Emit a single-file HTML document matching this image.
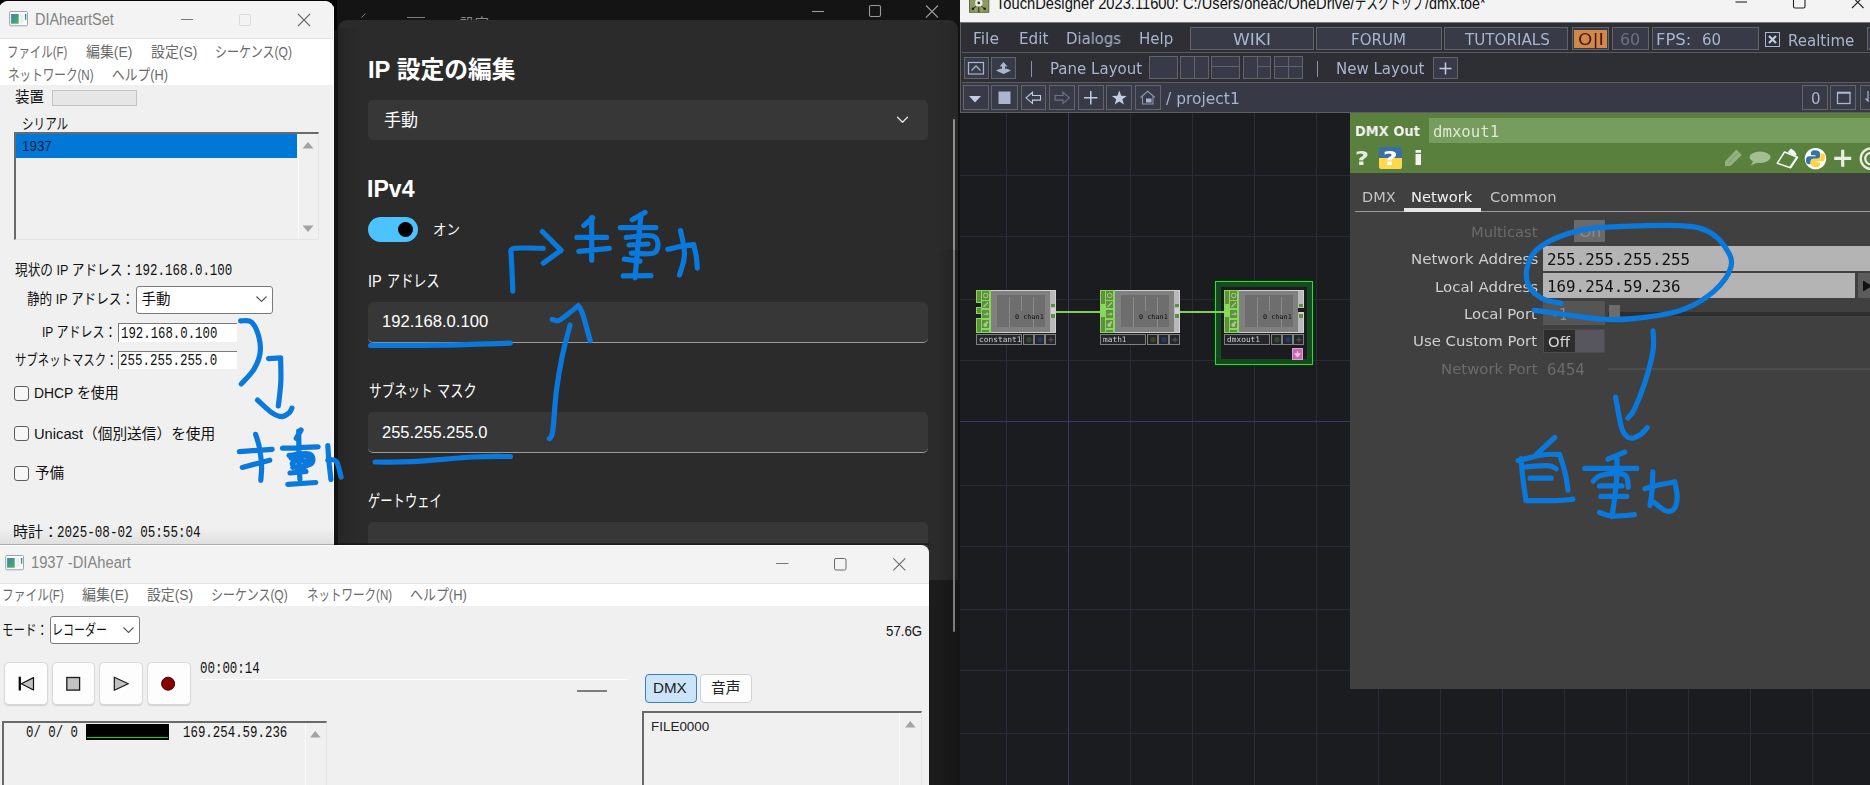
<!DOCTYPE html>
<html lang="ja"><head><meta charset="utf-8"><title>screenshot</title>
<style>
*{box-sizing:border-box;margin:0;padding:0}
html,body{width:1870px;height:785px;overflow:hidden;background:#1c1c1c}
body{position:relative;font-family:"Liberation Sans","Noto Sans CJK JP",sans-serif}
.a{position:absolute}
.t{position:absolute;white-space:pre;transform-origin:0 50%;display:block}
.fs{font-family:"Liberation Sans","Noto Sans CJK JP",sans-serif}
.fm{font-family:"Liberation Mono","Noto Sans CJK JP",monospace}
.fd{font-family:"DejaVu Sans","Liberation Sans",sans-serif;will-change:transform}
.fdm{font-family:"DejaVu Sans Mono","Liberation Mono",monospace;will-change:transform}
svg{position:absolute;overflow:visible}
.cb{position:absolute;width:15px;height:15px;border:1px solid #5c5c5c;border-radius:3px;background:#f6f6f6}
.sunk{position:absolute;border:1px solid #a0a0a0;border-top:2px solid #6a6a6a;border-left:2px solid #6a6a6a;border-right:1px solid #e3e3e3;border-bottom:1px solid #e3e3e3;background:#f0f0f0}
.tdb{position:absolute;border:1px solid #62646c;background:#383b47}
</style></head><body>
<div class="a" style="left:334px;top:0;width:626px;height:560px;background:#141414"></div>
<span class="t fs" style="left:459.7px;top:16.6px;font-size:14.5px;line-height:14.5px;color:#8a8a8a;transform:scaleX(1.0070);">設定</span>
<svg class="a" style="left:334px;top:0" width="626" height="22"><path d="M27.5 17.5 l4 -4 M73 17.5h18" stroke="#7d7d7d" stroke-width="1" fill="none"/>
<path d="M478 11.5h12" stroke="#9b9b9b" stroke-width="1.1" fill="none"/><rect x="535.5" y="5.5" width="11" height="11" rx="1.5" stroke="#9b9b9b" stroke-width="1.1" fill="none"/><path d="M592 5.5l12 12M604 5.5l-12 12" stroke="#9b9b9b" stroke-width="1.1" fill="none"/></svg>
<div class="a" style="left:338px;top:20px;width:620px;height:560px;background:#2b2b2b;border-radius:9px 9px 0 0"></div>
<span class="t fs" style="left:368.29px;top:58.8px;font-size:23.6px;line-height:23.6px;color:#fff;font-weight:bold;transform:scaleX(1.0081);">IP 設定の編集</span>
<div class="a" style="left:368px;top:100px;width:560px;height:40px;background:#373737;border-radius:5px"></div>
<span class="t fs" style="left:384.2px;top:112.2px;font-size:16.5px;line-height:16.5px;color:#fff;transform:scaleX(1.0308);">手動</span>
<svg class="a" style="left:896px;top:115px" width="14" height="10"><path d="M1.5 2.2l5 5 5-5" stroke="#e4e4e4" stroke-width="1.3" fill="none" stroke-linecap="round" stroke-linejoin="round"/></svg>
<span class="t fs" style="left:366.56px;top:177.2px;font-size:24.5px;line-height:24.5px;color:#fff;font-weight:bold;transform:scaleX(0.9443);">IPv4</span>
<div class="a" style="left:368px;top:217px;width:50px;height:25px;background:#4cc2ff;border-radius:13px"></div>
<div class="a" style="left:398px;top:222px;width:15px;height:15px;background:#000;border-radius:50%"></div>
<span class="t fs" style="left:432.57px;top:222.8px;font-size:14.5px;line-height:14.5px;color:#fff;transform:scaleX(0.9309);">オン</span>
<span class="t fs" style="left:367.82px;top:273.1px;font-size:16.5px;line-height:16.5px;color:#fff;transform:scaleX(0.8777);">IP</span><span class="t fs" style="left:387.3px;top:273.1px;font-size:16.5px;line-height:16.5px;color:#fff;transform:scaleX(0.7984);">アドレス</span>
<div class="a" style="left:368px;top:301.6px;width:559.5px;height:41.3px;background:#373737;border-radius:5px;border-bottom:1px solid #9a9a9a"></div>
<span class="t fs" style="left:381.82px;top:313.4px;font-size:17px;line-height:17px;color:#fff;transform:scaleX(0.9761);">192.168.0.100</span>
<span class="t fs" style="left:368.53px;top:383.1px;font-size:16.5px;line-height:16.5px;color:#fff;transform:scaleX(0.7709);">サブネット</span><span class="t fs" style="left:437.4px;top:383.1px;font-size:16.5px;line-height:16.5px;color:#fff;transform:scaleX(0.8000);">マスク</span>
<div class="a" style="left:368px;top:411.7px;width:559.5px;height:41.3px;background:#373737;border-radius:5px;border-bottom:1px solid #9a9a9a"></div>
<span class="t fs" style="left:382.4px;top:423.5px;font-size:17px;line-height:17px;color:#fff;transform:scaleX(0.9708);">255.255.255.0</span>
<span class="t fs" style="left:368.2px;top:493.2px;font-size:16.5px;line-height:16.5px;color:#fff;transform:scaleX(0.7456);">ゲートウェイ</span>
<div class="a" style="left:368px;top:522.2px;width:559.5px;height:41.3px;background:#373737;border-radius:5px"></div>
<div class="a" style="left:952.5px;top:119px;width:2px;height:513px;background:#9a9a9a;border-radius:1px"></div>
<div class="a" style="left:936px;top:20px;width:24px;height:230px;background:linear-gradient(90deg,rgba(0,0,0,0),rgba(0,0,0,.04) 45%,rgba(0,0,0,.1))"></div>
<div class="a" style="left:936px;top:250px;width:24px;height:535px;background:linear-gradient(90deg,rgba(0,0,0,0),rgba(0,0,0,.1) 45%,rgba(0,0,0,.26))"></div>
<div class="a" style="left:338px;top:28px;width:22px;height:516px;background:linear-gradient(90deg,rgba(0,0,0,.13),rgba(0,0,0,0))"></div>

<div class="a" style="left:0;top:0;width:337px;height:30px;background:#060606"></div>
<div class="a" style="left:-1px;top:0.700px;width:335px;height:545px;background:#f0f0f0;border-radius:9px 9px 0 0;overflow:hidden">
 <div class="a" style="left:0;top:0;width:336px;height:38.800px;background:#f3f3f3;border-bottom:1px solid #e2e2e2"></div>
 <div class="a" style="left:0;top:38.800px;width:336px;height:45.700px;background:#fff"></div>
 <div class="a" style="left:334px;top:0;width:1px;height:546px;background:#fafafa"></div>
</div>
<svg class="a" style="left:9px;top:11px" width="20" height="16"><defs><linearGradient id="ig" x1="0" y1="0" x2="1" y2="1"><stop offset="0" stop-color="#4a7db4"/><stop offset=".45" stop-color="#3f9a86"/><stop offset="1" stop-color="#4db258"/></linearGradient><linearGradient id="ig2" x1="0" y1="0" x2="0" y2="1"><stop offset="0" stop-color="#3f6fc0"/><stop offset="1" stop-color="#4db258"/></linearGradient></defs><rect x="0.700" y="0.500" width="17.800" height="14.300" rx="1" fill="#fbfbfb" stroke="#9aa3b3" stroke-width="1"/><rect x="2.100" y="3" width="7.600" height="9.700" fill="url(#ig)"/><rect x="11.300" y="3.200" width="3.200" height="9.300" fill="#ededed"/><rect x="15.900" y="3" width="1.400" height="5.900" fill="url(#ig2)"/></svg>
<span class="t fs" style="left:34.8px;top:11.6px;font-size:16px;line-height:16px;color:#828282;transform:scaleX(0.9030);">DIAheartSet</span>
<svg class="a" style="left:170px;top:8px" width="160" height="24"><path d="M11 11.5h12" stroke="#777" stroke-width="1"/><rect x="69.5" y="6.5" width="11" height="11" rx="1.5" stroke="#dcdcdc" fill="none"/><path d="M128 6l12 12M140 6l-12 12" stroke="#6a6a6a" stroke-width="1.1"/></svg>
<span class="t fs" style="left:6.98px;top:43.5px;font-size:15px;line-height:15px;color:#6a6a6a;transform:scaleX(0.7621);">ファイル(F)</span>
<span class="t fs" style="left:85.8px;top:43.5px;font-size:15px;line-height:15px;color:#6a6a6a;transform:scaleX(0.9280);">編集(E)</span>
<span class="t fs" style="left:151.0px;top:43.5px;font-size:15px;line-height:15px;color:#6a6a6a;transform:scaleX(0.9260);">設定(S)</span>
<span class="t fs" style="left:214.7px;top:43.5px;font-size:15px;line-height:15px;color:#6a6a6a;transform:scaleX(0.8018);">シーケンス(Q)</span>
<span class="t fs" style="left:7.73px;top:67.0px;font-size:15px;line-height:15px;color:#6a6a6a;transform:scaleX(0.7721);">ネットワーク(N)</span>
<span class="t fs" style="left:112.2px;top:67.0px;font-size:15px;line-height:15px;color:#6a6a6a;transform:scaleX(0.8507);">ヘルプ(H)</span>
<span class="t fs" style="left:14.5px;top:89.3px;font-size:15px;line-height:15px;color:#111;transform:scaleX(0.9600);">装置</span>
<div class="a" style="left:51.5px;top:89.900px;width:85px;height:16.500px;background:#e6e6e6;border:1px solid #c4c4c4"></div>
<span class="t fs" style="left:21.93px;top:116.0px;font-size:15px;line-height:15px;color:#111;transform:scaleX(0.7712);">シリアル</span>
<div class="sunk" style="left:13.5px;top:132px;width:305.5px;height:108px"></div>
<div class="a" style="left:15.5px;top:134px;width:281.5px;height:24px;background:#0078d7"></div>
<span class="t fs" style="left:22.44px;top:139.3px;font-size:14px;line-height:14px;color:#10203a;transform:scaleX(0.9553);">1937</span>
<div class="a" style="left:297.5px;top:134px;width:1px;height:105px;background:#fafafa"></div>
<svg class="a" style="left:298px;top:134px" width="21" height="106"><path d="M4.500 14.500l5.500-6.500 5.500 6.500z" fill="#a3a3a3"/><path d="M4.500 91.500l5.500 6.500 5.500-6.500z" fill="#a3a3a3"/></svg>
<span class="t fs" style="left:14.5px;top:262.8px;font-size:14.5px;line-height:14.5px;color:#111;transform:scaleX(0.8733);">現状の IP アドレス：</span>
<span class="t fm" style="left:134.53px;top:263.3px;font-size:16.2px;line-height:16.2px;color:#111;transform:scaleX(0.7707);">192.168.0.100</span>
<span class="t fs" style="left:27.0px;top:292.2px;font-size:14.5px;line-height:14.5px;color:#111;transform:scaleX(0.8704);">静的 IP アドレス：</span>
<div class="a" style="left:135.5px;top:286px;width:137px;height:27.5px;background:#fff;border:1px solid #7a7a7a;border-radius:3px"></div>
<span class="t fs" style="left:141.5px;top:292.2px;font-size:14.5px;line-height:14.5px;color:#111;transform:scaleX(1.0000);">手動</span>
<svg class="a" style="left:255px;top:295px" width="14" height="10"><path d="M1.5 1.5l5 5 5-5" stroke="#555" stroke-width="1.1" fill="none"/></svg>
<span class="t fs" style="left:42.47px;top:325.1px;font-size:14.5px;line-height:14.5px;color:#111;transform:scaleX(0.8277);">IP アドレス：</span>
<div class="a" style="left:118px;top:323.2px;width:118.5px;height:19px;background:#fff;border-top:1px solid #7a7a7a;border-left:1px solid #7a7a7a"></div>
<span class="t fm" style="left:121.24px;top:325.8px;font-size:16.2px;line-height:16.2px;color:#111;transform:scaleX(0.7626);">192.168.0.100</span>
<span class="t fs" style="left:14.5px;top:352.8px;font-size:14.5px;line-height:14.5px;color:#111;transform:scaleX(0.7848);">サブネットマスク：</span>
<div class="a" style="left:118px;top:350.7px;width:118.5px;height:18.5px;background:#fff;border-top:1px solid #7a7a7a;border-left:1px solid #7a7a7a"></div>
<span class="t fm" style="left:120.23px;top:353.3px;font-size:16.2px;line-height:16.2px;color:#111;transform:scaleX(0.7707);">255.255.255.0</span>
<div class="cb" style="left:14px;top:386px"></div>
<span class="t fs" style="left:33.64px;top:386.2px;font-size:14.5px;line-height:14.5px;color:#111;transform:scaleX(0.9569);">DHCP を使用</span>
<div class="cb" style="left:14px;top:425.5px"></div>
<span class="t fs" style="left:33.59px;top:426.8px;font-size:14.5px;line-height:14.5px;color:#111;transform:scaleX(1.0133);">Unicast（個別送信）を使用</span>
<div class="cb" style="left:14px;top:465.5px"></div>
<span class="t fs" style="left:34.6px;top:466.2px;font-size:14.5px;line-height:14.5px;color:#111;transform:scaleX(1.0035);">予備</span>
<span class="t fs" style="left:13.46px;top:524.8px;font-size:14.5px;line-height:14.5px;color:#111;transform:scaleX(1.0405);">時計：</span>
<span class="t fm" style="left:57.22px;top:525.3px;font-size:16.2px;line-height:16.2px;color:#111;transform:scaleX(0.7782);">2025-08-02 05:55:04</span>

<div class="a" style="left:0;top:528px;width:334px;height:16px;background:linear-gradient(rgba(0,0,0,0),rgba(0,0,0,.07))"></div>
<div class="a" style="left:0;top:544px;width:334px;height:1px;background:#adadad"></div>
<div class="a" style="left:334px;top:543px;width:595px;height:2px;background:linear-gradient(rgba(0,0,0,.25),rgba(0,0,0,.55))"></div>
<div class="a" style="left:0;top:545px;width:929px;height:240px;background:#f0f0f0;border-radius:0 8px 0 0;overflow:hidden;border-top:1px solid #fcfcfc">
 <div class="a" style="left:0;top:0;width:929px;height:37.500px;background:#f3f3f3;border-bottom:1px solid #e2e2e2"></div>
 <div class="a" style="left:0;top:37.500px;width:929px;height:22px;background:#fff"></div>
</div>
<svg class="a" style="left:5px;top:555px" width="20" height="16"><rect x="0.700" y="0.500" width="17.800" height="14.300" rx="1" fill="#fbfbfb" stroke="#9aa3b3" stroke-width="1"/><rect x="2.100" y="3" width="7.600" height="9.700" fill="url(#ig)"/><rect x="11.300" y="3.200" width="3.200" height="9.300" fill="#ededed"/><rect x="15.900" y="3" width="1.400" height="5.900" fill="url(#ig2)"/></svg>
<span class="t fs" style="left:31.08px;top:555.4px;font-size:16px;line-height:16px;color:#858585;transform:scaleX(0.9198);">1937 -DIAheart</span>
<svg class="a" style="left:770px;top:553px" width="150" height="24"><path d="M6 10.5h12.5" stroke="#777" stroke-width="1"/><rect x="64.5" y="5.5" width="11.5" height="11.5" rx="1.5" stroke="#6a6a6a" fill="none"/><path d="M123.3 5.4l12 12M135.3 5.4l-12 12" stroke="#6a6a6a" stroke-width="1.1"/></svg>
<span class="t fs" style="left:1.54px;top:587.1px;font-size:15px;line-height:15px;color:#6a6a6a;transform:scaleX(0.7815);">ファイル(F)</span>
<span class="t fs" style="left:81.8px;top:587.1px;font-size:15px;line-height:15px;color:#6a6a6a;transform:scaleX(0.9360);">編集(E)</span>
<span class="t fs" style="left:147.3px;top:587.1px;font-size:15px;line-height:15px;color:#6a6a6a;transform:scaleX(0.9240);">設定(S)</span>
<span class="t fs" style="left:211.4px;top:587.1px;font-size:15px;line-height:15px;color:#6a6a6a;transform:scaleX(0.7997);">シーケンス(Q)</span>
<span class="t fs" style="left:306.63px;top:587.1px;font-size:15px;line-height:15px;color:#6a6a6a;transform:scaleX(0.7676);">ネットワーク(N)</span>
<span class="t fs" style="left:410.4px;top:587.1px;font-size:15px;line-height:15px;color:#6a6a6a;transform:scaleX(0.8629);">ヘルプ(H)</span>
<span class="t fs" style="left:2.31px;top:623.2px;font-size:14.5px;line-height:14.5px;color:#111;transform:scaleX(0.7903);">モード：</span>
<div class="a" style="left:49.5px;top:616px;width:90px;height:27.5px;background:#fff;border:1px solid #7a7a7a;border-radius:3px"></div>
<span class="t fs" style="left:52.33px;top:623.2px;font-size:14.5px;line-height:14.5px;color:#111;transform:scaleX(0.7574);">レコーダー</span>
<svg class="a" style="left:122px;top:626px" width="14" height="10"><path d="M1.5 1.5l5 5 5-5" stroke="#555" stroke-width="1.1" fill="none"/></svg>
<span class="t fs" style="left:886.4px;top:623.5px;font-size:14px;line-height:14px;color:#111;transform:scaleX(0.9477);">57.6G</span>
<div class="a" style="left:4.2px;top:662.300px;width:44px;height:42.400px;background:#fdfdfd;border:1px solid #d9d9d9;border-radius:4.500px;box-shadow:0 1px 1px rgba(0,0,0,.13)"></div>
<div class="a" style="left:51.8px;top:662.300px;width:43.6px;height:42.400px;background:#fdfdfd;border:1px solid #d9d9d9;border-radius:4.500px;box-shadow:0 1px 1px rgba(0,0,0,.13)"></div>
<div class="a" style="left:99.4px;top:662.300px;width:43.6px;height:42.400px;background:#fdfdfd;border:1px solid #d9d9d9;border-radius:4.500px;box-shadow:0 1px 1px rgba(0,0,0,.13)"></div>
<div class="a" style="left:147px;top:662.300px;width:43.6px;height:42.400px;background:#fdfdfd;border:1px solid #d9d9d9;border-radius:4.500px;box-shadow:0 1px 1px rgba(0,0,0,.13)"></div>
<svg class="a" style="left:0;top:662px" width="200" height="44"><path d="M19.800 14.700v13.800" stroke="#0a0a0a" stroke-width="2.300"/><path d="M21.300 21.700l12.200-6.100v12.400z" fill="#c2c2c2" stroke="#111" stroke-width="1.200" stroke-linejoin="round"/><rect x="66.800" y="15.500" width="12.800" height="12.600" fill="#c2c2c2" stroke="#1a1a1a" stroke-width="1.300"/><path d="M114.300 15.200v13l14-6.500z" fill="#c2c2c2" stroke="#1a1a1a" stroke-width="1.200" stroke-linejoin="round"/><circle cx="168.100" cy="21.700" r="6.500" fill="#8b0000" stroke="#300" stroke-width="1"/></svg>
<span class="t fm" style="left:199.8px;top:661.1px;font-size:16.2px;line-height:16.2px;color:#111;transform:scaleX(0.7688);">00:00:14</span>
<div class="a" style="left:199.8px;top:679.3px;width:428px;height:1.2px;background:#fff"></div>
<div class="a" style="left:576.7px;top:689.5px;width:30px;height:2px;background:#7d7d7d"></div>
<div class="a" style="left:644.5px;top:673.5px;width:52.5px;height:29.5px;background:#cce4f7;border:1.5px solid #3a7dc0;border-radius:4px"></div>
<span class="t fs" style="left:652.95px;top:680.8px;font-size:14.5px;line-height:14.5px;color:#222;transform:scaleX(1.0460);">DMX</span>
<div class="a" style="left:699.5px;top:673.5px;width:52px;height:29.5px;background:#fdfdfd;border:1px solid #d2d2d2;border-radius:4px"></div>
<span class="t fs" style="left:711.0px;top:680.8px;font-size:14.5px;line-height:14.5px;color:#222;transform:scaleX(1.0175);">音声</span>
<div class="sunk" style="left:642px;top:711px;width:280px;height:90px"></div>
<span class="t fs" style="left:651.0px;top:719.9px;font-size:13.5px;line-height:13.5px;color:#222;transform:scaleX(0.9959);">FILE0000</span>
<div class="a" style="left:899px;top:713px;width:1px;height:80px;background:#fafafa"></div>
<svg class="a" style="left:899px;top:713px" width="22" height="20"><path d="M6 14.5l5.3-6.5 5.3 6.5z" fill="#a3a3a3"/></svg>
<div class="sunk" style="left:1.5px;top:721px;width:325px;height:80px"></div>
<span class="t fm" style="left:25.6px;top:724.5px;font-size:16.2px;line-height:16.2px;color:#111;transform:scaleX(0.7639);">0/ 0/ 0</span>
<div class="a" style="left:86.200px;top:724.200px;width:82.800px;height:15.400px;background:#000"></div><div class="a" style="left:87.200px;top:736.600px;width:80.800px;height:1.500px;background:#00e400"></div>
<span class="t fm" style="left:183.23px;top:724.5px;font-size:16.2px;line-height:16.2px;color:#111;transform:scaleX(0.7670);">169.254.59.236</span>
<div class="a" style="left:304.5px;top:723px;width:1px;height:70px;background:#fafafa"></div>
<svg class="a" style="left:304px;top:723px" width="22" height="20"><path d="M6 14.5l5.3-6.5 5.3 6.5z" fill="#a3a3a3"/></svg>

<div class="a" style="left:960px;top:0;width:910px;height:785px;background:#1b1c20"></div>
<div class="a" style="left:960px;top:0;width:910px;height:22px;background:#f3f3f3"></div>
<svg class="a" style="left:969px;top:0" width="22" height="14"><rect x="0.500" y="-8" width="19.300" height="20.300" fill="#8b9963" stroke="#5f6c3f"/><path d="M6.800 0v12M12.800 0v12" stroke="#97a570" stroke-width="1.600"/><path d="M9.800 6.500v6M9.800 4l-5.600 4.600M9.800 4l5.600 4.600" stroke="#2a2f1c" stroke-width="1" fill="none"/><circle cx="9.800" cy="2.900" r="3.700" fill="#ececec"/><circle cx="9.800" cy="2.900" r="1.300" fill="#2a2f1c"/><circle cx="3.900" cy="8.700" r="1.300" fill="#1d2112"/><circle cx="15.700" cy="8.700" r="1.300" fill="#1d2112"/></svg>
<span class="t fs" style="left:995.7px;top:-5.2px;font-size:16.5px;line-height:16.5px;color:#111;transform:scaleX(0.8909);">TouchDesigner 2023.11600: C:/Users/oneac/OneDrive/</span>
<span class="t fs" style="left:1355.31px;top:-5.2px;font-size:16.5px;line-height:16.5px;color:#111;transform:scaleX(0.6904);">デスクトップ</span>
<span class="t fs" style="left:1425.0px;top:-5.2px;font-size:16.5px;line-height:16.5px;color:#111;transform:scaleX(0.8708);">/dmx.toe*</span>
<svg class="a" style="left:1730px;top:0" width="140" height="12"><path d="M5.5 2h11.5" stroke="#222" stroke-width="1.1"/><path d="M63.5 -2v8.5a1.5 1.5 0 0 0 1.5 1.5h8.5a1.5 1.5 0 0 0 1.5-1.5v-8.5" stroke="#222" stroke-width="1.1" fill="none"/><path d="M122 -3.500l11.500 11.500M133.500 -3.500l-11.500 11.500" stroke="#222" stroke-width="1.1"/></svg>
<div class="a" style="left:960px;top:22px;width:910px;height:91px;background:#2e2f35;border-top:1px solid #77787e;border-left:1px solid #5c5d63;border-bottom:1px solid #5c5d63"></div>
<div class="a" style="left:962px;top:52.3px;width:908px;height:1px;background:#5b5c61"></div>
<div class="a" style="left:962px;top:81.8px;width:908px;height:1px;background:#5b5c61"></div>
<div class="a" style="left:962px;top:82.8px;width:908px;height:29.7px;background:#373a46"></div>
<span class="t fd" style="left:973.47px;top:32.2px;font-size:15px;line-height:15px;color:#a9b4cf;transform:scaleX(1.0347);">File</span>
<span class="t fd" style="left:1019.49px;top:32.2px;font-size:15px;line-height:15px;color:#a9b4cf;transform:scaleX(1.0118);">Edit</span>
<span class="t fd" style="left:1066.21px;top:32.2px;font-size:15px;line-height:15px;color:#a9b4cf;transform:scaleX(0.9895);">Dialogs</span>
<span class="t fd" style="left:1139.0px;top:32.2px;font-size:15px;line-height:15px;color:#a9b4cf;transform:scaleX(0.9977);">Help</span>
<div class="tdb" style="left:1189.5px;top:27.3px;width:124.5px;height:23.2px"></div>
<div class="tdb" style="left:1316.2px;top:27.3px;width:125.6px;height:23.2px"></div>
<div class="tdb" style="left:1444.2px;top:27.3px;width:124.3px;height:23.2px"></div>
<div class="tdb" style="left:1572.2px;top:27.3px;width:36.5px;height:23.2px"></div>
<div class="a" style="left:1574.2px;top:30px;width:33px;height:18.2px;background:#cf8a4a"></div>
<div class="tdb" style="left:1612.2px;top:27.3px;width:36.8px;height:23.2px"></div>
<div class="tdb" style="left:1652.2px;top:27.3px;width:106.5px;height:23.2px"></div>
<div class="tdb" style="left:1867.3px;top:27.3px;width:20px;height:23.2px"></div>
<span class="t fd" style="left:1233.3px;top:32.9px;font-size:15px;line-height:15px;color:#a9b4cf;transform:scaleX(1.1311);">WIKI</span>
<span class="t fd" style="left:1351.4px;top:32.9px;font-size:15px;line-height:15px;color:#a9b4cf;transform:scaleX(1.0050);">FORUM</span>
<span class="t fd" style="left:1464.71px;top:32.9px;font-size:15px;line-height:15px;color:#a9b4cf;transform:scaleX(1.0086);">TUTORIALS</span>
<span class="t fd" style="left:1578.3px;top:32.7px;font-size:15px;line-height:15px;color:#4a1410;transform:scaleX(1.2185);">O|I</span>
<span class="t fd" style="left:1619.95px;top:32.9px;font-size:15px;line-height:15px;color:#6c7080;transform:scaleX(1.0545);">60</span>
<span class="t fd" style="left:1656.2px;top:32.9px;font-size:15px;line-height:15px;color:#a9b4cf;transform:scaleX(1.0962);">FPS:</span>
<span class="t fd" style="left:1701.6px;top:32.9px;font-size:15px;line-height:15px;color:#a9b4cf;transform:scaleX(1.0032);">60</span>
<div class="a" style="left:1765px;top:32.4px;width:15px;height:14.8px;border:1px solid #a9b4cf;background:#2d2f36"></div>
<svg class="a" style="left:1765px;top:32.4px" width="15" height="15"><path d="M4 4l7 7M11 4l-7 7" stroke="#c3cce4" stroke-width="2.2"/></svg>
<span class="t fd" style="left:1787.5px;top:33.7px;font-size:15px;line-height:15px;color:#a9b4cf;transform:scaleX(0.9985);">Realtime</span>
<!-- toolbar row -->
<div class="tdb" style="left:964px;top:57.3px;width:24.6px;height:22.2px"></div>
<div class="tdb" style="left:991px;top:57.3px;width:25px;height:22.2px"></div>
<svg class="a" style="left:964px;top:57px" width="56" height="23"><rect x="4.5" y="5.5" width="15" height="11.5" fill="none" stroke="#aab5d0" stroke-width="1.2"/><path d="M7.5 13.5l4.5-4.5 4.5 4.5" fill="none" stroke="#aab5d0" stroke-width="1.3"/><path d="M32 13.5l4-1.8h7l4 1.8-7.5 3.5z" fill="#aab5d0"/><path d="M39.5 5l4 4.5h-2.5v3.5h-3v-3.5h-2.500z" fill="#aab5d0"/></svg>
<div class="a" style="left:1031px;top:61px;width:1px;height:15.5px;background:#8a93ab"></div>
<span class="t fd" style="left:1049.8px;top:61.7px;font-size:15px;line-height:15px;color:#a9b4cf;transform:scaleX(1.0003);">Pane Layout</span>
<div class="tdb" style="left:1149.2px;top:56.4px;width:28.5px;height:23.1px"></div>
<div class="tdb" style="left:1180px;top:56.4px;width:28.6px;height:23.1px"></div>
<div class="tdb" style="left:1211.3px;top:56.4px;width:28.3px;height:23.1px"></div>
<div class="tdb" style="left:1243.3px;top:56.4px;width:27.7px;height:23.1px"></div>
<div class="tdb" style="left:1274.2px;top:56.4px;width:28.5px;height:23.1px"></div>
<div class="a" style="left:1194px;top:57px;width:1px;height:22px;background:#62646c"></div>
<div class="a" style="left:1212px;top:66.400px;width:27px;height:1px;background:#62646c"></div>
<div class="a" style="left:1257px;top:57px;width:1px;height:22px;background:#62646c"></div>
<div class="a" style="left:1257px;top:66.400px;width:13.5px;height:1px;background:#62646c"></div>
<div class="a" style="left:1288px;top:57px;width:1px;height:22px;background:#62646c"></div>
<div class="a" style="left:1275px;top:66.400px;width:27px;height:1px;background:#62646c"></div>
<div class="a" style="left:1317.3px;top:61px;width:1px;height:15.5px;background:#8a93ab"></div>
<span class="t fd" style="left:1336.3px;top:61.7px;font-size:15px;line-height:15px;color:#a9b4cf;transform:scaleX(0.9955);">New Layout</span>
<div class="tdb" style="left:1433.3px;top:57.3px;width:24.3px;height:22.2px"></div>
<svg class="a" style="left:1433px;top:57px" width="25" height="23"><path d="M6.5 11.5h12M12.5 5.5v12" stroke="#c3cce4" stroke-width="1.5"/></svg>
<!-- path row -->
<div class="tdb" style="left:963.2px;top:85px;width:25.4px;height:25.4px"></div>
<div class="tdb" style="left:991.4px;top:85px;width:26.3px;height:25.4px"></div>
<div class="tdb" style="left:1020.5px;top:85px;width:25px;height:25.4px"></div>
<div class="tdb" style="left:1049.2px;top:85px;width:25.4px;height:25.4px"></div>
<div class="tdb" style="left:1078.3px;top:85px;width:25.4px;height:25.4px"></div>
<div class="tdb" style="left:1106.3px;top:85px;width:26px;height:25.4px"></div>
<div class="tdb" style="left:1135.4px;top:85px;width:25.4px;height:25.4px"></div>
<svg class="a" style="left:960px;top:85px" width="205" height="26"><path d="M9 11h12l-6 6.5z" fill="#c3cce4"/><rect x="38.5" y="6.500" width="12" height="12.500" fill="#aab5d0"/>
<path d="M66 12.800l6.500-5.500v3.200h8v4.600h-8v3.200z" fill="none" stroke="#c3cce4" stroke-width="1.1"/>
<path d="M109.500 12.800l-6.500-5.500v3.200h-8v4.600h8v3.200z" fill="none" stroke="#6f7588" stroke-width="1.1"/>
<path d="M124 12.800h13.500M130.800 6v13.500" stroke="#c3cce4" stroke-width="1.5"/>
<path d="M159.300 5.500l1.900 5.200 5.500 .2-4.300 3.400 1.500 5.300-4.600-3.100-4.600 3.100 1.500-5.300-4.300-3.400 5.500-.2z" fill="#c3cce4"/>
<path d="M180.500 12.500l7.200-6.200 7.200 6.200M182.500 11.500v7.500h10.500v-7.500" fill="none" stroke="#8c95ad" stroke-width="1.1"/><rect x="186" y="13.500" width="5.500" height="4" fill="#aab5d0"/></svg>
<span class="t fd" style="left:1166.3px;top:92.0px;font-size:15px;line-height:15px;color:#a9b4cf;transform:scaleX(1.0327);">/ project1</span>
<div class="tdb" style="left:1802.2px;top:85px;width:25.4px;height:25.4px"></div>
<div class="tdb" style="left:1830.4px;top:85px;width:26px;height:25.4px"></div>
<div class="tdb" style="left:1859.5px;top:85px;width:25.4px;height:25.4px"></div>
<span class="t fd" style="left:1810.5px;top:92.0px;font-size:15px;line-height:15px;color:#a9b4cf;transform:scaleX(1.0000);">0</span>
<svg class="a" style="left:1830px;top:85px" width="40" height="26"><rect x="7.500" y="7.500" width="12.500" height="11" fill="none" stroke="#aab5d0" stroke-width="1.3"/><path d="M7 7.800h13.500" stroke="#aab5d0" stroke-width="2"/><path d="M38 6v10l-2.500-2.500" stroke="#aab5d0" stroke-width="1.2" fill="none"/></svg>
<svg class="a" style="left:0;top:0" width="1870" height="785" shape-rendering="crispEdges"><path d="M1006.5 113V785" stroke="#2a2b39" stroke-width="1"/><path d="M1068.5 113V785" stroke="#38386a" stroke-width="1"/><path d="M1130.5 113V785" stroke="#2a2b39" stroke-width="1"/><path d="M1192.5 113V785" stroke="#2a2b39" stroke-width="1"/><path d="M1254.5 113V785" stroke="#2a2b39" stroke-width="1"/><path d="M1316.5 113V785" stroke="#2a2b39" stroke-width="1"/><path d="M1378.5 113V785" stroke="#2a2b39" stroke-width="1"/><path d="M1440.5 113V785" stroke="#2a2b39" stroke-width="1"/><path d="M1502.5 113V785" stroke="#2a2b39" stroke-width="1"/><path d="M1564.5 113V785" stroke="#2a2b39" stroke-width="1"/><path d="M1626.5 113V785" stroke="#2a2b39" stroke-width="1"/><path d="M1688.5 113V785" stroke="#2a2b39" stroke-width="1"/><path d="M1750.5 113V785" stroke="#2a2b39" stroke-width="1"/><path d="M1812.5 113V785" stroke="#2a2b39" stroke-width="1"/><path d="M960 175.5H1870" stroke="#2a2b39" stroke-width="1"/><path d="M960 236.5H1870" stroke="#2a2b39" stroke-width="1"/><path d="M960 299.5H1870" stroke="#2a2b39" stroke-width="1"/><path d="M960 360.5H1870" stroke="#2a2b39" stroke-width="1"/><path d="M960 421.5H1870" stroke="#38386a" stroke-width="1"/><path d="M960 485.5H1870" stroke="#2a2b39" stroke-width="1"/><path d="M960 546.5H1870" stroke="#2a2b39" stroke-width="1"/><path d="M960 609.5H1870" stroke="#2a2b39" stroke-width="1"/><path d="M960 670.5H1870" stroke="#2a2b39" stroke-width="1"/><path d="M960 733.5H1870" stroke="#2a2b39" stroke-width="1"/></svg>

<!-- selection -->
<div class="a" style="left:1215px;top:281px;width:98px;height:84px;border:1.500px solid #10f01a;background:#144a1e"></div>
<div class="a" style="left:1221px;top:287px;width:86px;height:72px;background:#1b1c20"></div>
<!-- wires -->
<div class="a" style="left:1055px;top:311px;width:46px;height:2px;background:#7fd053"></div>
<div class="a" style="left:1179px;top:311px;width:46px;height:2px;background:#7fd053"></div>
<div class="a" style="left:976px;top:290px;width:80px;height:56px">
<div class="a" style="left:0px;top:0px;width:80px;height:43px;background:#d2d2d2"></div>
<div class="a" style="left:15px;top:1px;width:59px;height:41px;background:#808080"></div>
<div class="a" style="left:21px;top:5px;width:48px;height:32px;background:#6e6e6e"></div>
<div class="a" style="left:33px;top:7px;width:1px;height:30px;background:#8b8b8b"></div>
<div class="a" style="left:45px;top:6px;width:1px;height:15px;background:#8b8b8b"></div>
<div class="a" style="left:57px;top:7px;width:1px;height:30px;background:#8b8b8b"></div>
<div class="a" style="left:74px;top:1px;width:5px;height:41px;background:#b9b9b9"></div>
<div class="a" style="left:74.5px;top:18px;width:5px;height:6px;background:#d0d0d6"></div>
<div class="a" style="left:75px;top:14px;width:4px;height:2.7px;background:#5f8f3f"></div>
<div class="a" style="left:75px;top:24.4px;width:4px;height:3.6px;background:#5f8f3f"></div>
<div class="a" style="left:0px;top:0px;width:15px;height:43px;background:#86d95b"></div>
<div class="a" style="left:1.2px;top:1px;width:3.6px;height:11px;background:#5f8f3f"></div>
<div class="a" style="left:1.2px;top:18px;width:3.6px;height:5.2px;background:#5f8f3f"></div>
<div class="a" style="left:1.2px;top:29.3px;width:3.6px;height:12.7px;background:#5f8f3f"></div>
<div class="a" style="left:0px;top:13px;width:4.8px;height:4px;background:#1b1c20"></div>
<div class="a" style="left:0px;top:24.2px;width:4.8px;height:3.6px;background:#1b1c20"></div>
<div class="a" style="left:5.8px;top:1.2px;width:7.4px;height:8.7px;background:#5f8f3f"></div>
<div class="a" style="left:5.8px;top:11.2px;width:7.4px;height:6.8px;background:#5f8f3f"></div>
<div class="a" style="left:5.8px;top:20px;width:7.4px;height:7.7px;background:#5f8f3f"></div>
<div class="a" style="left:5.8px;top:30px;width:7.4px;height:8px;background:#5f8f3f"></div>
<div class="a" style="left:5.8px;top:39.7px;width:7.4px;height:2.3px;background:#5f8f3f"></div>
<svg class="a" style="left:5.8px;top:0" width="8" height="43"><circle cx="3.7" cy="5.500" r="2.300" fill="none" stroke="#a9cc92" stroke-width="1"/><path d="M1.500 17l4.500-4.500" stroke="#a9cc92" stroke-width="1.300"/><path d="M1.500 23.800h3v-1.800l2.300 2-2.300 2v-1.300h-3z" fill="#a9cc92"/><circle cx="3.300" cy="35" r="1.900" fill="#a9cc92"/><circle cx="5" cy="32.500" r="1.200" fill="#a9cc92"/></svg>
<div class="a" style="left:0px;top:44.3px;width:45.6px;height:10.5px;background:#25262a;border:1px solid #808080"></div>
<div class="a" style="left:47.3px;top:44.3px;width:11px;height:10.5px;background:#25262a;border:1px solid #808080"></div>
<div class="a" style="left:58.4px;top:44.3px;width:11px;height:10.5px;background:#25262a;border:1px solid #808080"></div>
<div class="a" style="left:69.3px;top:44.3px;width:10.7px;height:10.5px;background:#25262a;border:1px solid #808080"></div>
<svg class="a" style="left:47px;top:44px" width="34" height="11"><circle cx="6" cy="5.700" r="2.700" fill="#35482a"/><circle cx="17" cy="5.700" r="2.700" fill="#233a68"/><path d="M25.500 5.700h5M28 3.200v5" stroke="#4c4c4c" stroke-width="1.500"/></svg>
</div>
<span class="t fdm" style="left:1014.6px;top:314.4px;font-size:6.5px;line-height:6.5px;color:#0e0e0e;transform:scaleX(1.0517);">0 chan1</span>
<span class="t fdm" style="left:979.3px;top:336.3px;font-size:7.6px;line-height:7.6px;color:#cdcdcd;transform:scaleX(1.0343);">constant1</span>
<div class="a" style="left:1100px;top:290px;width:80px;height:56px">
<div class="a" style="left:0px;top:0px;width:80px;height:43px;background:#d2d2d2"></div>
<div class="a" style="left:15px;top:1px;width:59px;height:41px;background:#808080"></div>
<div class="a" style="left:21px;top:5px;width:48px;height:32px;background:#6e6e6e"></div>
<div class="a" style="left:33px;top:7px;width:1px;height:30px;background:#8b8b8b"></div>
<div class="a" style="left:45px;top:6px;width:1px;height:15px;background:#8b8b8b"></div>
<div class="a" style="left:57px;top:7px;width:1px;height:30px;background:#8b8b8b"></div>
<div class="a" style="left:74px;top:1px;width:5px;height:41px;background:#b9b9b9"></div>
<div class="a" style="left:74.5px;top:18px;width:5px;height:6px;background:#d0d0d6"></div>
<div class="a" style="left:75px;top:14px;width:4px;height:2.7px;background:#5f8f3f"></div>
<div class="a" style="left:75px;top:24.4px;width:4px;height:3.6px;background:#5f8f3f"></div>
<div class="a" style="left:0px;top:0px;width:15px;height:43px;background:#86d95b"></div>
<div class="a" style="left:1.2px;top:1px;width:3.7px;height:13px;background:#5f8f3f"></div>
<div class="a" style="left:1.2px;top:27px;width:3.7px;height:15px;background:#5f8f3f"></div>
<div class="a" style="left:5.8px;top:1.2px;width:7.4px;height:8.7px;background:#5f8f3f"></div>
<div class="a" style="left:5.8px;top:11.2px;width:7.4px;height:6.8px;background:#5f8f3f"></div>
<div class="a" style="left:5.8px;top:20px;width:7.4px;height:7.7px;background:#5f8f3f"></div>
<div class="a" style="left:5.8px;top:30px;width:7.4px;height:8px;background:#5f8f3f"></div>
<div class="a" style="left:5.8px;top:39.7px;width:7.4px;height:2.3px;background:#5f8f3f"></div>
<svg class="a" style="left:5.8px;top:0" width="8" height="43"><circle cx="3.7" cy="5.500" r="2.300" fill="none" stroke="#a9cc92" stroke-width="1"/><path d="M1.500 17l4.500-4.500" stroke="#a9cc92" stroke-width="1.300"/><path d="M1.500 23.800h3v-1.800l2.300 2-2.300 2v-1.300h-3z" fill="#a9cc92"/><circle cx="3.300" cy="35" r="1.900" fill="#a9cc92"/><circle cx="5" cy="32.500" r="1.200" fill="#a9cc92"/></svg>
<div class="a" style="left:0px;top:44.3px;width:45.6px;height:10.5px;background:#25262a;border:1px solid #808080"></div>
<div class="a" style="left:47.3px;top:44.3px;width:11px;height:10.5px;background:#25262a;border:1px solid #808080"></div>
<div class="a" style="left:58.4px;top:44.3px;width:11px;height:10.5px;background:#25262a;border:1px solid #808080"></div>
<div class="a" style="left:69.3px;top:44.3px;width:10.7px;height:10.5px;background:#25262a;border:1px solid #808080"></div>
<svg class="a" style="left:47px;top:44px" width="34" height="11"><circle cx="6" cy="5.700" r="2.700" fill="#35482a"/><circle cx="17" cy="5.700" r="2.700" fill="#233a68"/><path d="M25.500 5.700h5M28 3.200v5" stroke="#4c4c4c" stroke-width="1.500"/></svg>
</div>
<span class="t fdm" style="left:1138.6px;top:314.4px;font-size:6.5px;line-height:6.5px;color:#0e0e0e;transform:scaleX(1.0517);">0 chan1</span>
<span class="t fdm" style="left:1103.3px;top:336.3px;font-size:7.6px;line-height:7.6px;color:#cdcdcd;transform:scaleX(1.0306);">math1</span>
<div class="a" style="left:1224px;top:290px;width:80px;height:56px">
<div class="a" style="left:0px;top:0px;width:80px;height:43px;background:#d2d2d2"></div>
<div class="a" style="left:15px;top:1px;width:59px;height:41px;background:#808080"></div>
<div class="a" style="left:21px;top:5px;width:48px;height:32px;background:#6e6e6e"></div>
<div class="a" style="left:33px;top:7px;width:1px;height:30px;background:#8b8b8b"></div>
<div class="a" style="left:45px;top:6px;width:1px;height:15px;background:#8b8b8b"></div>
<div class="a" style="left:57px;top:7px;width:1px;height:30px;background:#8b8b8b"></div>
<div class="a" style="left:74px;top:1px;width:5px;height:41px;background:#b9b9b9"></div>
<div class="a" style="left:74.5px;top:18px;width:5px;height:6px;background:#d0d0d6"></div>
<div class="a" style="left:75px;top:14px;width:4px;height:2.7px;background:#5f8f3f"></div>
<div class="a" style="left:75px;top:24.4px;width:4px;height:3.6px;background:#5f8f3f"></div>
<div class="a" style="left:0px;top:0px;width:15px;height:43px;background:#86d95b"></div>
<div class="a" style="left:1.2px;top:1px;width:3.7px;height:13px;background:#5f8f3f"></div>
<div class="a" style="left:1.2px;top:27px;width:3.7px;height:15px;background:#5f8f3f"></div>
<div class="a" style="left:5.8px;top:1.2px;width:7.4px;height:8.7px;background:#5f8f3f"></div>
<div class="a" style="left:5.8px;top:11.2px;width:7.4px;height:6.8px;background:#5f8f3f"></div>
<div class="a" style="left:5.8px;top:20px;width:7.4px;height:7.7px;background:#5f8f3f"></div>
<div class="a" style="left:5.8px;top:30px;width:7.4px;height:8px;background:#5f8f3f"></div>
<div class="a" style="left:5.8px;top:39.7px;width:7.4px;height:2.3px;background:#5f8f3f"></div>
<svg class="a" style="left:5.8px;top:0" width="8" height="43"><circle cx="3.7" cy="5.500" r="2.300" fill="none" stroke="#a9cc92" stroke-width="1"/><path d="M1.500 17l4.500-4.500" stroke="#a9cc92" stroke-width="1.300"/><path d="M1.500 23.800h3v-1.800l2.300 2-2.300 2v-1.300h-3z" fill="#a9cc92"/><circle cx="3.300" cy="35" r="1.900" fill="#a9cc92"/><circle cx="5" cy="32.500" r="1.200" fill="#a9cc92"/></svg>
<div class="a" style="left:74px;top:18px;width:6px;height:4px;background:#1b1c20"></div>
<div class="a" style="left:0px;top:44.3px;width:45.6px;height:10.5px;background:#25262a;border:1px solid #808080"></div>
<div class="a" style="left:47.3px;top:44.3px;width:11px;height:10.5px;background:#25262a;border:1px solid #808080"></div>
<div class="a" style="left:58.4px;top:44.3px;width:11px;height:10.5px;background:#25262a;border:1px solid #808080"></div>
<div class="a" style="left:69.3px;top:44.3px;width:10.7px;height:10.5px;background:#25262a;border:1px solid #808080"></div>
<svg class="a" style="left:47px;top:44px" width="34" height="11"><circle cx="6" cy="5.700" r="2.700" fill="#35482a"/><circle cx="17" cy="5.700" r="2.700" fill="#233a68"/><path d="M25.500 5.700h5M28 3.200v5" stroke="#4c4c4c" stroke-width="1.500"/></svg>
</div>
<span class="t fdm" style="left:1262.6px;top:314.4px;font-size:6.5px;line-height:6.5px;color:#0e0e0e;transform:scaleX(1.0517);">0 chan1</span>
<span class="t fdm" style="left:1227.3px;top:336.3px;font-size:7.6px;line-height:7.6px;color:#cdcdcd;transform:scaleX(1.0330);">dmxout1</span>
<div class="a" style="left:1292px;top:348px;width:11px;height:12px;background:#c46aae;border:1px solid #e79ad6"></div>
<svg class="a" style="left:1292px;top:348px" width="11" height="12"><path d="M5.500 3.200v3M3.300 6l2.200 2.800 2.200-2.800z" stroke="#ecc4e2" stroke-width="1.300" fill="#ecc4e2"/></svg>

<div class="a" style="left:1350px;top:112.500px;width:520px;height:576px;background:#404040"></div>
<div class="a" style="left:1350px;top:112.500px;width:520px;height:60.500px;background:#5a803e"></div>
<div class="a" style="left:1429px;top:118px;width:441px;height:24.600px;background:#769c5e"></div>
<span class="t fd" style="left:1355.02px;top:124.7px;font-size:13.3px;line-height:13.3px;color:#f2f2f2;font-weight:bold;transform:scaleX(0.9785);">DMX Out</span>
<span class="t fdm" style="left:1433.3px;top:125.0px;font-size:15.6px;line-height:15.6px;color:#dfe8d6;transform:scaleX(1.0057);">dmxout1</span>
<span class="t fd" style="left:1355.22px;top:149.2px;font-size:19px;line-height:19px;color:#e6ecdf;font-weight:bold;transform:scaleX(1.2778);">?</span>
<div class="a" style="left:1378.700px;top:147.200px;width:23px;height:22.300px;background:linear-gradient(#3b6ea5 0,#3b6ea5 50%,#ffd84d 50%,#ffd84d 100%);border-radius:2px"></div>
<span class="t fd" style="left:1383.17px;top:149.0px;font-size:19px;line-height:19px;color:#fff;font-weight:bold;transform:scaleX(1.3333);">?</span>
<span class="t fd" style="left:1412.88px;top:149.2px;font-size:19px;line-height:19px;color:#f2f2f2;font-weight:bold;transform:scaleX(1.6250);">i</span>
<svg class="a" style="left:1720px;top:146px" width="150" height="26">
<path d="M16.4 3.500l5.400 5.500-11.300 10.900h-5.500v-4.500z" fill="#93b07f"/><path d="M8.500 16.500l9.500-9.500" stroke="#7c9c68" stroke-width="1"/>
<ellipse cx="40" cy="11.300" rx="10.500" ry="5.700" fill="#a3bf92"/><path d="M33.600 15l-3.100 4.600 7.700-3.300z" fill="#a3bf92"/>
<path d="M64.500 6l13 5.200-7 10.500-13.200-4.500z" fill="none" stroke="#f4f4f4" stroke-width="1.500" stroke-linejoin="round"/><path d="M77 11.500l-6.800 10.200" stroke="#f4f4f4" stroke-width="2.200"/><path d="M67.700 6.200l3.200-3.800 3.600 2.500 2.300 3.800-2.300 1.300z" fill="#f4f4f4"/>
<circle cx="95.500" cy="12.600" r="10.700" fill="#fff"/>
<path d="M95 4.200c-3.500 0-4 1.500-4 3v2h4.500v1h-6.500c-2 0-3 1.500-3 4s1 4 3 4h1.500v-2.500c0-2 1.500-3 3-3h4c1.500 0 2.500-1 2.500-2.500v-3c0-1.500-1.500-3-5-3z" fill="#3673a5"/>
<path d="M96 21.200c3.500 0 4-1.500 4-3v-2h-4.500v-1h6.500c2 0 3-1.500 3-4s-1-4-3-4h-1.500v2.500c0 2-1.500 3-3 3h-4c-1.500 0-2.500 1-2.500 2.500v3c0 1.500 1.500 3 5 3z" fill="#ffd340"/>
<path d="M114.200 12.300h17M122.700 3.800v17" stroke="#e8eee2" stroke-width="3.200"/>
<circle cx="151" cy="12.600" r="10.300" fill="none" stroke="#e8eee2" stroke-width="2.300"/><circle cx="151" cy="12.600" r="5.800" fill="none" stroke="#e8eee2" stroke-width="2.300"/>
</svg>
<span class="t fd" style="left:1362.3px;top:190.1px;font-size:14.5px;line-height:14.5px;color:#c3c3c3;transform:scaleX(1.0007);">DMX</span>
<span class="t fd" style="left:1411.39px;top:190.1px;font-size:14.5px;line-height:14.5px;color:#f0f0f0;transform:scaleX(1.0126);">Network</span>
<span class="t fd" style="left:1489.5px;top:190.1px;font-size:14.5px;line-height:14.5px;color:#c3c3c3;transform:scaleX(1.0216);">Common</span>
<div class="a" style="left:1355px;top:210.500px;width:515px;height:1px;background:#9a9a9a"></div>
<div class="a" style="left:1404px;top:208px;width:77px;height:4px;background:#e6e6e6"></div>
<span class="t fd" style="left:1471.19px;top:224.8px;font-size:14.5px;line-height:14.5px;color:#6b6b6b;transform:scaleX(1.0146);">Multicast</span>
<div class="a" style="left:1574px;top:220px;width:31px;height:22px;background:#6a6a6a"></div>
<span class="t fd" style="left:1579.0px;top:224.8px;font-size:14.5px;line-height:14.5px;color:#8a8a8a;transform:scaleX(1.0817);">On</span>
<span class="t fd" style="left:1410.86px;top:251.6px;font-size:14.5px;line-height:14.5px;color:#cfcfcf;transform:scaleX(1.0351);">Network Address</span>
<div class="a" style="left:1543.300px;top:245.800px;width:330px;height:25px;background:#b4b4b4"></div>
<span class="t fdm" style="left:1546.59px;top:251.8px;font-size:15.7px;line-height:15.7px;color:#111;transform:scaleX(1.0105);">255.255.255.255</span>
<span class="t fd" style="left:1434.97px;top:279.6px;font-size:14.5px;line-height:14.5px;color:#cfcfcf;transform:scaleX(1.0317);">Local Address</span>
<div class="a" style="left:1543.300px;top:273.200px;width:311.400px;height:25px;background:#b4b4b4"></div>
<div class="a" style="left:1857.600px;top:273.200px;width:14px;height:25px;background:#5c5c5c"></div>
<svg class="a" style="left:1858px;top:274px" width="12" height="24"><path d="M5 6.500l9 5.500-9 5.500z" fill="#111"/></svg>
<span class="t fdm" style="left:1546.59px;top:279.3px;font-size:15.7px;line-height:15.7px;color:#111;transform:scaleX(1.0093);">169.254.59.236</span>
<span class="t fd" style="left:1464.27px;top:306.8px;font-size:14.5px;line-height:14.5px;color:#cfcfcf;transform:scaleX(1.0278);">Local Port</span>
<div class="a" style="left:1543.300px;top:301px;width:61.700px;height:24.300px;background:#555"></div>
<span class="t fdm" style="left:1551.3px;top:306.5px;font-size:15.7px;line-height:15.7px;color:#8c8c8c;transform:scaleX(0.8513);">-1</span>
<div class="a" style="left:1608px;top:312px;width:262px;height:4px;background:#2e2e2e"></div>
<div class="a" style="left:1609px;top:304.500px;width:11px;height:13.500px;background:#6c6c6c"></div>
<span class="t fd" style="left:1413.17px;top:334.4px;font-size:14.5px;line-height:14.5px;color:#cfcfcf;transform:scaleX(1.0282);">Use Custom Port</span>
<div class="a" style="left:1543.300px;top:329.200px;width:61.700px;height:23.400px;background:#57555d;border:1px solid #4b4b4b"></div>
<div class="a" style="left:1544.400px;top:330.300px;width:30.300px;height:21.300px;background:#2d2d2d"></div>
<span class="t fd" style="left:1548.0px;top:334.6px;font-size:14.5px;line-height:14.5px;color:#d8d8d8;transform:scaleX(1.0262);">Off</span>
<span class="t fd" style="left:1440.67px;top:362.1px;font-size:14.5px;line-height:14.5px;color:#6b6b6b;transform:scaleX(1.0278);">Network Port</span>
<span class="t fdm" style="left:1546.6px;top:361.8px;font-size:15.7px;line-height:15.7px;color:#6b6b6b;transform:scaleX(0.9963);">6454</span>
<div class="a" style="left:1608px;top:367.500px;width:262px;height:2px;background:#4c4c4c"></div>


<svg class="a" style="left:0;top:0" width="1870" height="785" fill="none" stroke="#0a79db" stroke-width="5.2" stroke-linecap="round" stroke-linejoin="round">
<title>手書きの注釈: 手動 / 手動 / 自動</title>
<path d="M240.6 320.9C242.6 321.1 248.2 319.2 251.5 322.1C254.8 325.0 257.2 330.8 258.8 336.6C260.4 342.4 260.9 347.6 260.0 353.6C259.1 359.6 257.3 363.7 253.9 369.3C250.5 374.9 243.6 381.2 241.3 383.9 M268.5 358.6L280.6 357.8 M280.6 357.8C280.6 362.2 281.2 373.2 280.8 382.0C280.4 390.8 278.8 401.6 278.3 406.0 M257.5 400.1C260.2 402.4 267.6 409.9 272.1 412.9C276.6 415.9 278.7 416.6 281.8 416.6C284.9 416.6 287.1 414.5 289.0 412.9C290.9 411.3 291.4 409.0 291.9 408.1 M255.6 434.3C256.1 436.1 257.7 440.2 258.6 444.0C259.5 447.8 260.1 450.6 260.6 455.0C261.2 459.4 261.6 463.3 261.6 468.0C261.6 472.7 260.9 478.2 260.8 480.5 M239.4 451.7L272.1 449.3 M242.3 467.4L269.7 460.2 M301.1 429.9L296.3 438.4 M298.7 431.1C298.8 435.5 298.8 446.1 299.0 455.0C299.2 463.9 299.7 475.0 299.9 479.5 M282.5 448.1L318.1 446.9 M289.0 455.3C292.8 455.1 305.6 452.5 309.6 454.1C313.6 455.7 313.9 461.6 310.8 464.0C307.7 466.4 296.0 466.8 292.7 467.4 M291.0 458.0C293.2 457.5 299.7 455.3 303.0 455.5C306.3 455.7 308.3 457.2 309.0 459.0C309.7 460.8 309.4 463.9 307.0 465.5C304.6 467.1 298.7 468.0 296.0 467.5C293.3 467.0 291.8 464.4 292.5 463.0C293.2 461.6 297.6 460.2 300.0 460.0C302.4 459.8 304.5 461.6 305.5 462.0 M290.0 473.0L306.0 471.5 M287.8 484.4L315.7 482.5 M327.8 445.6C328.0 448.6 328.4 455.8 329.0 462.0C329.6 468.2 330.6 476.3 330.9 479.5 M327.8 460.2C329.4 460.4 333.9 458.3 336.3 461.4C338.7 464.5 340.2 474.2 341.1 477.1 M370.6 345.4C383.3 345.4 414.4 345.6 440.0 345.2C465.6 344.8 497.5 343.5 510.4 343.1 M375.2 462.0C381.9 461.9 393.8 462.5 411.9 461.6C430.0 460.7 455.7 457.9 473.8 457.0C491.9 456.1 503.7 456.6 510.4 456.5 M549.4 438.7C550.0 437.2 551.5 439.2 552.8 430.6C554.1 422.0 554.6 405.1 556.3 391.7C558.0 378.3 559.5 369.5 562.0 357.3C564.5 345.1 568.5 331.1 570.0 325.2 M552.2 319.5C553.4 319.7 555.7 321.6 558.6 320.6C561.5 319.6 564.4 316.7 568.0 314.0C571.6 311.3 576.2 307.2 578.1 305.7 M578.1 305.7C578.9 307.2 580.4 307.4 582.6 313.8C584.8 320.2 588.8 335.9 590.2 340.8 M512.8 291.2C512.7 287.3 512.3 276.6 512.0 270.0C511.7 263.4 511.2 258.9 511.2 255.0C511.2 251.2 509.7 250.3 512.2 249.0C514.7 247.7 519.3 248.1 525.0 248.0C530.7 247.9 539.9 248.2 543.3 248.3 M542.3 231.5L561.1 250.3L543.3 263.1 M592.7 217.7L583.8 225.6 M591.7 217.7L591.7 260.2 M576.9 237.4L606.5 237.4 M578.8 251.3L609.4 248.3 M645.0 212.4L632.2 219.7 M641.0 214.7C640.5 220.3 639.1 233.4 638.0 245.0C636.9 256.6 635.6 271.9 635.1 277.9 M620.3 227.6L655.8 227.6 M626.2 237.4C631.3 237.2 648.6 233.8 653.9 236.5C659.2 239.2 659.1 249.2 654.9 252.3C650.7 255.4 635.5 253.0 631.2 253.2 M629.0 245.0L648.0 244.0 M624.3 259.2L640.0 261.1 M623.3 275.9L650.9 275.6 M680.5 230.5C681.2 234.8 684.7 246.0 684.5 254.2C684.3 262.4 680.4 271.2 679.5 275.0 M667.7 249.3C670.1 248.8 676.3 247.4 681.0 246.5C685.7 245.6 691.3 244.9 693.6 244.6 M693.6 244.6C694.1 246.7 695.5 251.7 696.2 256.0C696.9 260.3 697.1 265.9 697.3 268.1 M1534.3 310.3C1539.2 311.0 1547.9 312.3 1561.2 314.0C1574.5 315.7 1591.4 318.9 1607.1 319.5C1622.8 320.1 1632.8 319.0 1646.8 317.1C1660.8 315.2 1671.2 314.2 1683.5 309.4C1695.8 304.6 1705.4 298.9 1714.1 291.1C1722.8 283.3 1729.0 274.7 1731.0 266.6C1733.0 258.5 1729.0 253.2 1724.8 246.7C1720.6 240.2 1715.6 235.2 1708.0 231.4C1700.4 227.6 1696.4 226.9 1683.5 225.9C1670.6 224.9 1654.5 225.4 1637.7 225.9C1620.9 226.4 1605.8 226.5 1591.8 228.4C1577.8 230.3 1571.3 232.1 1561.2 236.0C1551.1 239.9 1543.0 243.9 1536.7 249.8C1530.4 255.7 1528.3 261.4 1526.9 268.1C1525.5 274.8 1526.2 280.9 1529.1 286.5C1532.0 292.1 1536.9 295.6 1542.8 298.7C1548.7 301.8 1557.8 302.5 1561.2 303.3 M1653.0 330.8C1653.0 334.4 1654.4 341.4 1653.0 350.7C1651.6 360.0 1648.7 370.6 1645.3 381.3C1641.9 392.0 1637.8 402.1 1634.6 408.8C1631.4 415.5 1629.1 416.3 1627.9 418.0 M1615.6 397.2C1616.4 401.4 1618.3 413.5 1619.8 420.0C1621.3 426.5 1621.5 429.3 1623.6 432.6C1625.7 435.9 1628.0 437.8 1631.0 438.2C1634.0 438.6 1637.2 436.6 1640.2 434.7C1643.2 432.8 1645.9 429.0 1647.2 427.7 M1554.7 437.5L1536.4 454.3 M1518.2 460.6C1522.6 459.6 1534.4 456.2 1542.0 455.0C1549.6 453.8 1556.4 454.4 1559.6 454.3 M1559.6 454.3C1560.6 457.8 1563.7 466.7 1565.2 473.3C1566.7 479.9 1567.5 487.0 1568.0 490.1 M1521.0 458.5C1521.4 462.5 1522.2 472.7 1523.1 480.3C1524.0 487.9 1525.4 496.3 1525.9 499.9 M1525.9 500.6C1531.4 500.6 1547.5 500.9 1556.1 500.6C1564.7 500.3 1569.8 499.5 1572.9 499.2 M1525.2 467.0C1529.3 466.7 1542.0 465.3 1547.7 465.6C1553.4 465.9 1554.6 468.2 1556.1 468.8 M1530.1 478.2L1551.2 478.2 M1624.7 452.2L1607.9 459.2 M1584.8 468.4L1636.7 468.4 M1617.0 456.4C1616.9 461.3 1617.2 472.0 1616.3 483.1C1615.4 494.2 1612.9 510.5 1612.1 516.7 M1593.2 481.0C1594.6 480.0 1596.7 476.8 1600.9 475.4C1605.1 474.0 1611.7 473.2 1616.3 473.3C1620.9 473.4 1623.9 473.5 1626.1 476.1C1628.3 478.7 1627.8 485.2 1628.2 487.3 M1599.5 485.9L1621.9 485.9 M1600.9 496.4L1626.8 496.4 M1599.5 512.5C1601.8 513.1 1605.7 515.6 1612.1 516.0C1618.5 516.4 1630.4 514.9 1634.5 514.6 M1652.8 471.9C1652.7 475.2 1652.6 483.9 1652.1 490.1C1651.6 496.3 1650.4 502.7 1650.0 505.5 M1645.1 488.7C1647.8 487.9 1654.6 485.8 1660.0 484.6C1665.4 483.4 1672.1 482.4 1674.8 481.9 M1674.8 481.9C1675.2 484.7 1677.4 492.1 1677.2 497.1C1677.0 502.1 1676.0 506.7 1673.8 509.2C1671.6 511.7 1669.1 511.9 1665.4 510.6C1661.7 509.3 1655.7 503.6 1653.5 502.0"/>
</svg>

</body></html>
